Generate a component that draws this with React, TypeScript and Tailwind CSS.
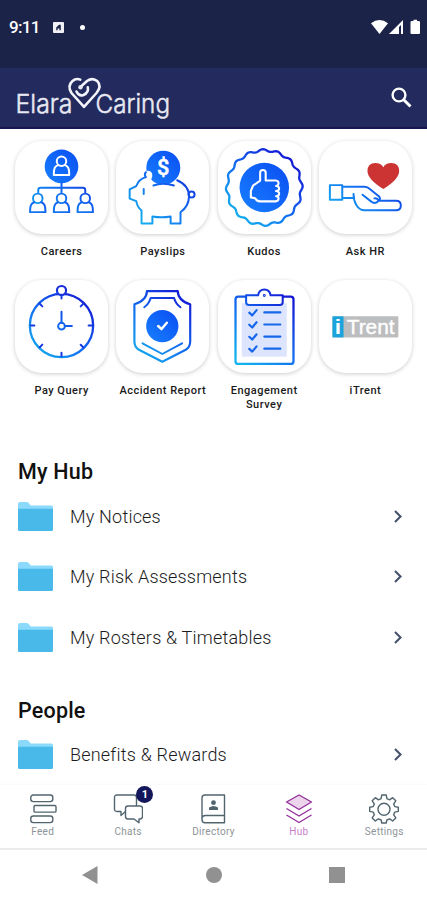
import type { ReactNode } from "react"

const scallop = Array.from({ length: 193 }, (_, i) => {
  const a = (i / 192) * Math.PI * 2
  const r = 37.6 + 1.2 * Math.cos(a * 16 + 0.6)
  return `${(46.8 + r * Math.cos(a)).toFixed(2)} ${(47 + r * Math.sin(a)).toFixed(2)}`
}).join("L")

function TileSvg({ id, children }: { id: string; children: ReactNode }) {
  return (
    <svg viewBox="0 0 94 94" className="w-full h-full" fill="none" stroke={`url(#${id})`} strokeWidth="2" strokeLinecap="round" strokeLinejoin="round">
      <defs>
        <linearGradient id={id} gradientUnits="userSpaceOnUse" x1="18" y1="80" x2="74" y2="16">
          <stop offset="0" stopColor="#14b4ee" />
          <stop offset="0.5" stopColor="#1268f0" />
          <stop offset="1" stopColor="#1414d2" />
        </linearGradient>
        <linearGradient id={`${id}-fill`} x1="0" y1="1" x2="1" y2="0">
          <stop offset="0" stopColor="#1880ff" />
          <stop offset="1" stopColor="#0a4df2" />
        </linearGradient>
      </defs>
      {children}
    </svg>
  )
}

const person = "M-3.6 3.6C-7 5-7.8 7-7.8 13.6H7.8C7.8 7 7 5 3.6 3.6"

function CareersIcon() {
  return (
    <TileSvg id="careers">
      <circle cx="47" cy="25.7" r="17" fill="url(#careers-fill)" stroke="none" />
      <g stroke="#fff">
        <circle cx="47" cy="20.5" r="4.8" />
        <path transform="translate(47 20.8)" d={person} />
      </g>
      <path d="M47 42V52M23.5 52V49.5Q23.5 47.2 26 47.2H68.5Q71 47.2 71 49.5V52" />
      {[23, 47, 71].map((x) => (
        <g key={x}>
          <circle cx={x} cy="58" r="4.8" fill="#fff" />
          <path transform={`translate(${x} 58.3)`} d={person} />
        </g>
      ))}
    </TileSvg>
  )
}

function PayslipsIcon() {
  return (
    <TileSvg id="payslips">
      <circle cx="47.8" cy="27" r="17.2" fill="url(#payslips-fill)" stroke="none" />
      <path
        fill="#fff"
        stroke="none"
        d="M13.8 49L20 46Q23 38 29 35.5Q28 30 33 30Q37.4 31 36.6 36Q34.5 40 38 45Q48 41 58.5 45L62 39.5Q74 45 74 55Q73 67 65.2 72V83.5H55.2V76H36.8V83.5H25.8V70Q22 67 20.5 61L13.8 58Z"
      />
      <path d="M30 36.5Q23 38.5 20.5 45.5L13.8 49V58.2L20.5 60.8Q21.5 67 25.8 70.3V83.5H36.8V76.3Q46 78 55.2 76.3V83.5H65.2V72Q73.5 66 73.8 56.5Q74 45 61.8 39.7M37.8 45Q47.5 41.5 58.5 45M28 48.5V53.5" />
      <path d="M30 36.5Q28.2 33.2 30.2 31.5" />
      <circle cx="76.4" cy="54" r="3" />
      <text x="47.8" y="34.6" textAnchor="middle" fill="#fff" stroke="#fff" strokeWidth="0.5" className="font-[Roboto] text-[22px] font-medium">$</text>
    </TileSvg>
  )
}

function KudosIcon() {
  return (
    <TileSvg id="kudos">
      <path d={`M${scallop}Z`} strokeWidth="2.3" />
      <circle cx="46.8" cy="47" r="25" fill="url(#kudos-fill)" stroke="none" />
      <path
        stroke="#fff"
        strokeWidth="2.1"
        d="M42.6 32Q42.6 29.3 45.4 29.3Q48.2 29.3 48.2 32V40H58.5Q61.4 40.4 61.2 43Q61 45.2 58.7 45.4Q61.8 45.6 61.8 48Q61.8 50.4 58.7 50.6Q61.8 50.8 61.8 53.2Q61.8 55.6 58.7 55.8Q61.4 56 61.2 58.3Q61 60.8 58.3 61H42.5Q39 60.8 37.5 57.8L33.2 57V50.5L35.5 45L42.6 40Z"
      />
    </TileSvg>
  )
}

function AskHrIcon() {
  return (
    <TileSvg id="askhr">
      <path fill="#cc3433" stroke="none" d="M65 48.5Q49 38.5 49 30.5Q49 22.3 57 22.3Q62.5 22.3 65 26.5Q67.5 22.3 73 22.3Q81 22.3 81 30.5Q81 38.5 65 48.5Z" />
      <path d="M11 44.6H23.5V59.3H11ZM23.5 46.3H46Q49 46.3 52 49L61 56.3Q62.5 58.5 60.3 60.6M23.5 57.5H34.7M34.9 53.5C35 62 39 70 46 70H78Q82.7 70 82.7 65.2Q82.7 60.4 78 60.4H60.3Q56.3 64.5 52.5 61L44 54.3M56 58Q59 57.5 60.3 60.6" />
    </TileSvg>
  )
}

function PayQueryIcon() {
  return (
    <TileSvg id="payquery">
      <circle cx="47" cy="46" r="32" strokeWidth="2.3" />
      <circle cx="47" cy="10.7" r="4.6" fill="#fff" strokeWidth="2.2" />
      <circle cx="47" cy="46.7" r="3.4" />
      <path d="M47 43V32M50.6 46.5H57.5" />
      {[0, 45, 90, 135, 180, 225, 270, 315].map((deg) => (
        <path key={deg} transform={`rotate(${deg} 47 46)`} d="M47 15L47.01 18.6" />
      ))}
    </TileSvg>
  )
}

function AccidentIcon() {
  return (
    <TileSvg id="accident">
      <path strokeWidth="2.2" d="M31.3 11.2H62.4Q62.8 21 75 24.5V62Q75 68 70.5 70.5L46.8 82.6L23.2 70.5Q18.6 68 18.6 62V24.5Q31 21 31.3 11.2Z" />
      <path d="M28.5 27.5Q33.5 24 35 18.2H58.7Q60.2 24 65.2 27.5M26.8 64L46.8 74.8L66.8 64" />
      <circle cx="46.8" cy="46.7" r="16.3" fill="url(#accident-fill)" stroke="none" />
      <path stroke="#fff" strokeWidth="2.5" d="M42.6 46.5L46 49.6L51.4 43.2" />
    </TileSvg>
  )
}

function SurveyIcon() {
  return (
    <TileSvg id="survey">
      <rect x="24" y="23.5" width="45.5" height="54" fill="#dce5fd" stroke="none" />
      <path strokeWidth="2.3" d="M28.2 16.8H20.5Q17.7 16.8 17.7 19.5V82Q17.7 84.8 20.5 84.8H73.5Q76.3 84.8 76.3 82V19.5Q76.3 16.8 73.5 16.8H65.5" />
      <path strokeWidth="2.1" fill="#fff" d="M28.4 15.4H40.5Q41.5 9.6 46.8 9.6Q52.2 9.6 53.2 15.4H65.4V22.5Q65.4 25.2 62.5 25.2H31.3Q28.4 25.2 28.4 22.5Z" />
      <circle cx="46.8" cy="15.6" r="0.5" />
      {[32.8, 45, 57.2, 69.4].map((y) => (
        <path key={y} stroke="#1767ea" strokeWidth="2.2" transform={`translate(0 ${y})`} d="M31.6 .2L34.6 3L39 -2.3M46.8 0L63 .01" />
      ))}
    </TileSvg>
  )
}

function ITrentLogo() {
  return (
    <svg viewBox="0 0 94 94" className="w-full h-full font-['Liberation_Sans']">
      <rect x="13.6" y="36.7" width="66.6" height="21.3" rx="1" fill="#bcbdbf" />
      <rect x="13.6" y="36.7" width="11.2" height="21.3" fill="#1ba3dc" />
      <text x="15.9" y="54.4" fill="#fff" textLength="6.4" lengthAdjust="spacingAndGlyphs" className="text-[21px] font-bold">i</text>
      <text x="28" y="54.2" fill="#fff" stroke="#fff" strokeWidth="0.4" textLength="48.5" lengthAdjust="spacingAndGlyphs" className="text-[20.5px]">Trent</text>
    </svg>
  )
}

const tiles = [
  { label: "Careers", icon: <CareersIcon /> },
  { label: "Payslips", icon: <PayslipsIcon /> },
  { label: "Kudos", icon: <KudosIcon /> },
  { label: "Ask HR", icon: <AskHrIcon /> },
  { label: "Pay Query", icon: <PayQueryIcon /> },
  { label: "Accident Report", icon: <AccidentIcon /> },
  { label: "Engagement Survey", icon: <SurveyIcon /> },
  { label: "iTrent", icon: <ITrentLogo /> },
]

function Row({ label }: { label: string }) {
  return (
    <li className="flex items-center h-[60.5px] pl-[18px] pr-[25px]">
      <svg viewBox="0 0 35 29" className="w-[35px] h-[29px] shrink-0">
        <path d="M0 2Q0 0 2 0H8.5Q10.5 0 11.5 2T14 3.5H33.5Q35 3.5 35 5V12H0Z" fill="#8bdafb" />
        <path d="M0 6.8H35V27.5Q35 29 33.5 29H1.5Q0 29 0 27.5Z" fill="#49b9ea" />
      </svg>
      <span className="ml-[17px] flex-1 text-[18px] tracking-[0.2px] text-[#1c1c1c] whitespace-nowrap font-light">{label}</span>
      <svg viewBox="0 0 8 13" className="w-[8px] h-[13px]" fill="none" stroke="#45526b" strokeWidth="2.1">
        <path d="M1 1L6.5 6.5L1 12" />
      </svg>
    </li>
  )
}

const slate = "#52656f"

const tabs = [
  {
    label: "Feed",
    icon: (
      <>
        <rect x="2.8" y="1" width="22" height="6.6" rx="2.5" />
        <rect x="6" y="11.5" width="22" height="6.6" rx="1.2" />
        <rect x="2.8" y="22" width="22" height="6.6" rx="2.5" />
      </>
    ),
  },
  {
    label: "Chats",
    icon: (
      <>
        <path d="M12.5 17.5L8 21.5V17.5H4Q1.5 17.5 1.5 15V3.5Q1.5 1 4 1H21Q23.5 1 23.5 3.5V12" />
        <path d="M15 12H27Q29.5 12 29.5 14.5V22.5Q29.5 25 27 25H26V28.8L21 25H15Q12.5 25 12.5 22.5V14.5Q12.5 12 15 12Z" />
      </>
    ),
  },
  {
    label: "Directory",
    icon: (
      <>
        <path d="M26.5 21.5V1H7Q4 1 4 4V25.5Q4 28.7 7 28.7H26.5V21.5H7.5Q4 21.5 4 25" />
        <circle cx="15.5" cy="8.7" r="2.4" fill={slate} stroke="none" />
        <path d="M11 16V13.5Q15.5 10.5 20 13.5V16Z" fill={slate} stroke="none" />
      </>
    ),
  },
  {
    label: "Hub",
    icon: (
      <>
        <path d="M15 1L27.5 8L15 15.5L2.5 8Z" fill="#ecd5ec" />
        <path d="M2.5 14.5L15 22L27.5 14.5M2.5 21L15 28.5L27.5 21" />
      </>
    ),
  },
  {
    label: "Settings",
    icon: (
      <>
        <path d="M12.8 1H17.2L17.9 4.7L20.6 5.8L23.7 3.7L26.8 6.8L24.7 9.9L25.8 12.6L29.3 13.2V17.4L25.8 18.1L24.7 20.8L26.8 23.9L23.7 27L20.6 24.9L17.9 26L17.2 29H12.8L12.1 26L9.4 24.9L6.3 27L3.2 23.9L5.3 20.8L4.2 18.1L.7 17.4V13.2L4.2 12.6L5.3 9.9L3.2 6.8L6.3 3.7L9.4 5.8L12.1 4.7Z" />
        <circle cx="15" cy="15.2" r="6" />
      </>
    ),
  },
]

function StatusBar() {
  return (
    <div className="h-[68px] bg-[#1c2349] pl-[9px] pr-[6px] pb-[13px] flex items-center text-white">
      <span className="text-[17px] font-medium tracking-[-0.7px] w-[30px]">9:11</span>
      <svg viewBox="0 0 12 12" className="ml-[14px] w-[11px] h-[11px]">
        <rect width="12" height="12" rx="1" fill="#f0f0f5" />
        <path d="M3.5 9V6L6.5 3H8.5V9H7V7H5V9Z" fill="#1c2349" />
      </svg>
      <span className="ml-[16px] w-[5px] h-[5px] rounded-full bg-white" />
      <svg viewBox="0 0 50 16" className="ml-auto mb-0.5 w-[50px] h-[16px]" fill="#fff">
        <path d="M0 4.3Q8.5-2.5 17 4.3L8.5 15Z" />
        <path d="M18 15L32 1V15H30V6L28 8V15Z" />
        <path d="M28 8.5V15H18Z" />
        <path d="M39.5 3Q39.5 2 41 2H42.5V.8H46V2H47.5Q49 2 49 3V14Q49 15 48 15H40.5Q39.5 15 39.5 14Z" />
      </svg>
    </div>
  )
}

function Header() {
  return (
    <header className="h-[61px] bg-[#222a5e] border-b-2 border-[#171650] flex items-center justify-between pl-[14px] pr-[15px]">
      <svg viewBox="-3 0 160 46" className="w-[160px] h-[46px] overflow-visible font-['Inter']" fill="#e8e9f2">
        <text x="-1.5" y="38" textLength="57" lengthAdjust="spacingAndGlyphs" stroke="#e8e9f2" strokeWidth="0.5" className="text-[26px] font-light">Elara</text>
        <path
          d="M63.3 4.6Q59 2.8 55.5 6Q50 11 54.5 18L67 31.8L79.5 18Q85 11 80.5 6.3Q75.5 2 70 6L63.7 11.8M59.5 16.5Q62 21.8 66.5 20Q72 17.3 70.8 12.2"
          fill="none"
          stroke="#f3f4fb"
          strokeWidth="2.6"
          strokeLinecap="round"
          strokeLinejoin="round"
        />
        <circle cx="63.5" cy="12.3" r="2.2" />
        <text x="78.5" y="38" textLength="74.5" lengthAdjust="spacingAndGlyphs" stroke="#e8e9f2" strokeWidth="0.5" className="text-[26px] font-light">Caring</text>
      </svg>
      <svg viewBox="0 0 21 21" className="w-[21px] h-[21px]" fill="none" stroke="#fff" strokeWidth="2.4">
        <circle cx="8" cy="8" r="6.4" />
        <path d="M12.5 12.5L19.5 19.5" strokeWidth="3" />
      </svg>
    </header>
  )
}

export default function App() {
  return (
    <div className="w-[427px] h-[900px] overflow-hidden bg-white font-['Roboto',sans-serif] flex flex-col">
      <StatusBar />
      <Header />

      <main className="h-[656px] overflow-hidden">
        <div className="grid grid-cols-4 pt-3 px-[11px]">
          {tiles.map((tile) => (
            <div key={tile.label} className="h-[139px] flex flex-col items-center">
              <div className="w-[93px] h-[93px] rounded-[27px] bg-white shadow-[0_1px_4px_rgba(0,0,0,0.2)]">{tile.icon}</div>
              <span className="mt-[11px] w-[95px] text-center text-[11px] leading-[14px] font-medium tracking-[0.5px] text-[#1a1a1a]">
                {tile.label}
              </span>
            </div>
          ))}
        </div>

        <h2 className="mt-[39px] pl-[18px] text-[21.5px] leading-[28px] font-medium tracking-[0.2px] text-[#111]">My Hub</h2>
        <ul>
          <Row label="My Notices" />
          <Row label="My Risk Assessments" />
          <Row label="My Rosters & Timetables" />
        </ul>

        <h2 className="mt-[29px] pl-[18px] text-[21.5px] leading-[28px] font-medium tracking-[0.2px] text-[#111]">People</h2>
        <ul>
          <Row label="Benefits & Rewards" />
        </ul>
      </main>

      <nav className="h-[65px] grid grid-cols-5 border-b-2 border-[#ebebed] shadow-[0_-1px_2px_rgba(0,0,0,0.03)]">
        {tabs.map((tab) => (
          <div key={tab.label} className="relative flex flex-col items-center pt-[9px]">
            <svg viewBox="0 0 30 30" className="w-[30px] h-[30px]" fill="none" stroke={tab.label === "Hub" ? "#94309a" : slate} strokeWidth="1.4" strokeLinejoin="round">
              {tab.icon}
            </svg>
            <span className={tab.label === "Hub" ? "text-[10px] leading-[16px] tracking-[0.3px] text-[#c77fc9]" : "text-[10px] leading-[16px] tracking-[0.3px] text-[#8d9499]"}>
              {tab.label}
            </span>
            {tab.label === "Chats" && (
              <span className="absolute left-[51px] top-px w-[17px] h-[17px] rounded-full bg-[#13165a] text-white text-[11px] leading-[17px] font-bold text-center">1</span>
            )}
          </div>
        ))}
      </nav>

      <div className="flex-1 flex justify-between items-center pl-[82px] pr-[82px]">
        <svg viewBox="0 0 16 18" className="w-[16px] h-[18px]" fill="#919191">
          <path d="M0 9L15.5 0V18Z" />
        </svg>
        <span className="w-[16px] h-[16px] rounded-full bg-[#919191]" />
        <span className="w-[16px] h-[16px] bg-[#919191]" />
      </div>
    </div>
  )
}
